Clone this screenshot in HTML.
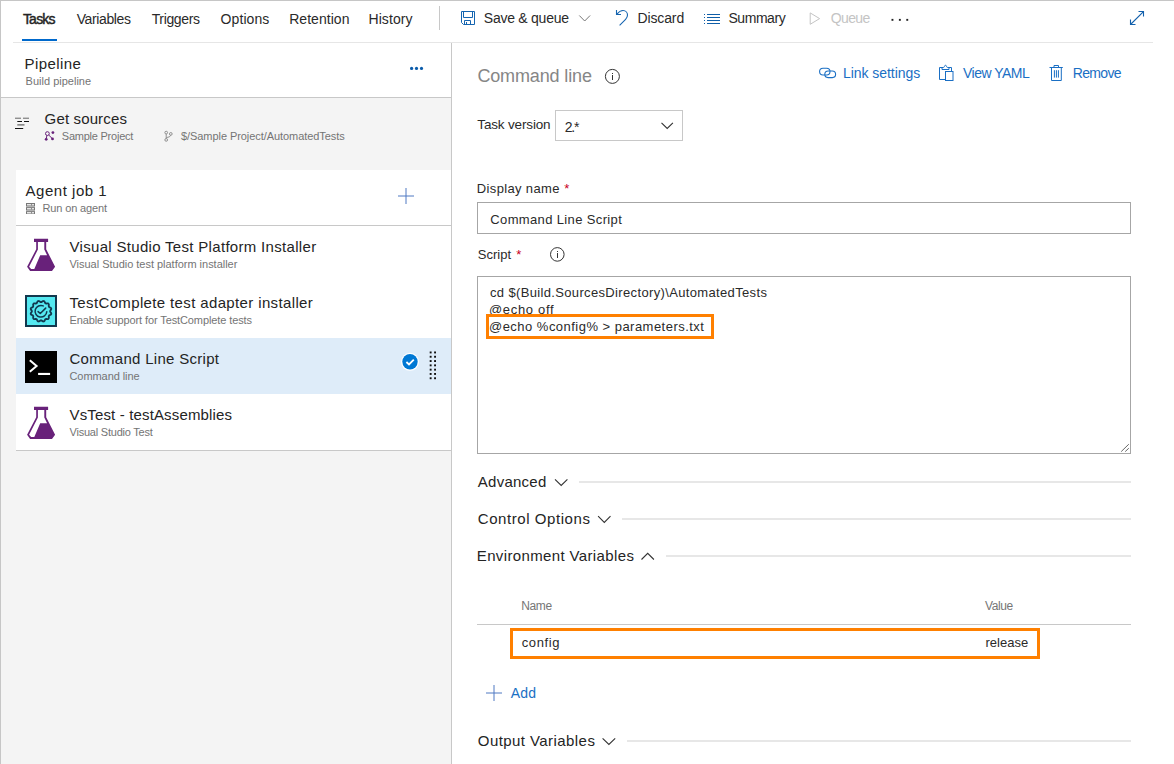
<!DOCTYPE html>
<html lang="en">
<head>
<meta charset="utf-8">
<title>Build pipeline - Tasks</title>
<style>
html,body{margin:0;padding:0;background:#fff}
body{width:1174px;height:764px;position:relative;overflow:hidden;font-family:"Liberation Sans",sans-serif}
.b{position:absolute}
.t{position:absolute;white-space:pre;line-height:20px;height:20px}
svg{position:absolute;left:0;top:0;overflow:visible}
</style>
</head>
<body>
<!-- frame borders -->
<div class="b" style="left:0;top:0;width:1174px;height:1px;background:#c6c6c6"></div>
<div class="b" style="left:0;top:0;width:1px;height:764px;background:#c6c6c6"></div>

<!-- tab underline + header rule -->
<div class="b" style="left:13px;top:42px;width:1140px;height:1px;background:#e6e6e6"></div>
<div class="b" style="left:22px;top:39px;width:35px;height:2px;background:#0069cc"></div>
<div class="b" style="left:439px;top:6px;width:1px;height:24px;background:#c8c8c8"></div>

<!-- left panel -->
<div class="b" style="left:1px;top:98px;width:450px;height:666px;background:#f4f4f4"></div>
<div class="b" style="left:1px;top:97px;width:450px;height:1px;background:#c8c8c8"></div>
<div class="b" style="left:451px;top:43px;width:1px;height:721px;background:#c8c8c8"></div>
<div class="b" style="left:16px;top:170px;width:435px;height:280px;background:#fff"></div>
<div class="b" style="left:16px;top:225px;width:435px;height:1px;background:#c8c8c8"></div>
<div class="b" style="left:16px;top:450px;width:435px;height:1px;background:#c8c8c8"></div>
<div class="b" style="left:16px;top:338px;width:435px;height:56px;background:#deecf9"></div>

<!-- right panel boxes -->
<div class="b" style="left:555px;top:110px;width:126px;height:29px;border:1px solid #c8c8c8;background:#fff"></div>
<div class="b" style="left:477px;top:202px;width:652px;height:30px;border:1px solid #a6a6a6;background:#fff"></div>
<div class="b" style="left:477px;top:276px;width:652px;height:176px;border:1px solid #a6a6a6;background:#fff"></div>
<div class="b" style="left:579px;top:481px;width:552px;height:2px;background:#e7e7e7"></div>
<div class="b" style="left:622px;top:518px;width:509px;height:2px;background:#e7e7e7"></div>
<div class="b" style="left:666px;top:555px;width:465px;height:2px;background:#e7e7e7"></div>
<div class="b" style="left:627px;top:740px;width:504px;height:2px;background:#e7e7e7"></div>
<div class="b" style="left:477px;top:624px;width:654px;height:1px;background:#c8c8c8"></div>

<span class="t" style="left:22.90px;top:9.15px;font-size:14px;color:#242424;letter-spacing:-0.772px;-webkit-text-stroke:0.45px #242424">Tasks</span>
<span class="t" style="left:76.70px;top:9.15px;font-size:14px;color:#2a2a2a;letter-spacing:-0.391px">Variables</span>
<span class="t" style="left:151.70px;top:9.15px;font-size:14px;color:#2a2a2a;letter-spacing:-0.361px">Triggers</span>
<span class="t" style="left:220.60px;top:9.15px;font-size:14px;color:#2a2a2a;letter-spacing:0.075px">Options</span>
<span class="t" style="left:289.20px;top:9.15px;font-size:14px;color:#2a2a2a;letter-spacing:0.044px">Retention</span>
<span class="t" style="left:368.50px;top:9.15px;font-size:14px;color:#2a2a2a;letter-spacing:0.074px">History</span>
<span class="t" style="left:483.80px;top:8.15px;font-size:14px;color:#2a2a2a;letter-spacing:-0.252px">Save &amp; queue</span>
<span class="t" style="left:637.40px;top:8.15px;font-size:14px;color:#2a2a2a;letter-spacing:-0.111px">Discard</span>
<span class="t" style="left:728.40px;top:8.15px;font-size:14px;color:#2a2a2a;letter-spacing:-0.433px">Summary</span>
<span class="t" style="left:830.70px;top:8.15px;font-size:14px;color:#c4c4c4;letter-spacing:-0.612px">Queue</span>
<span class="t" style="left:24.60px;top:53.80px;font-size:15px;color:#242424;letter-spacing:0.396px">Pipeline</span>
<span class="t" style="left:25.60px;top:71.19px;font-size:11px;color:#747474;letter-spacing:0.006px">Build pipeline</span>
<span class="t" style="left:44.60px;top:108.80px;font-size:15px;color:#242424;letter-spacing:0.143px">Get sources</span>
<span class="t" style="left:61.80px;top:126.19px;font-size:11px;color:#747474;letter-spacing:-0.233px">Sample Project</span>
<span class="t" style="left:181.00px;top:126.19px;font-size:11px;color:#747474;letter-spacing:-0.066px">$/Sample Project/AutomatedTests</span>
<span class="t" style="left:25.60px;top:180.80px;font-size:15px;color:#242424;letter-spacing:0.515px">Agent job 1</span>
<span class="t" style="left:42.50px;top:198.19px;font-size:11px;color:#747474;letter-spacing:-0.136px">Run on agent</span>
<span class="t" style="left:69.50px;top:236.80px;font-size:15px;color:#242424;letter-spacing:0.312px">Visual Studio Test Platform Installer</span>
<span class="t" style="left:69.50px;top:254.19px;font-size:11px;color:#747474;letter-spacing:-0.019px">Visual Studio test platform installer</span>
<span class="t" style="left:69.50px;top:292.80px;font-size:15px;color:#242424;letter-spacing:0.363px">TestComplete test adapter installer</span>
<span class="t" style="left:69.50px;top:310.19px;font-size:11px;color:#747474;letter-spacing:-0.105px">Enable support for TestComplete tests</span>
<span class="t" style="left:69.50px;top:348.80px;font-size:15px;color:#242424;letter-spacing:0.291px">Command Line Script</span>
<span class="t" style="left:69.50px;top:366.19px;font-size:11px;color:#747474;letter-spacing:-0.073px">Command line</span>
<span class="t" style="left:69.50px;top:404.80px;font-size:15px;color:#242424;letter-spacing:0.149px">VsTest - testAssemblies</span>
<span class="t" style="left:69.50px;top:422.19px;font-size:11px;color:#747474;letter-spacing:-0.217px">Visual Studio Test</span>
<span class="t" style="left:477.40px;top:65.76px;font-size:18px;color:#868686;letter-spacing:-0.140px">Command line</span>
<span class="t" style="left:843.00px;top:63.15px;font-size:14px;color:#1a6fc4;letter-spacing:-0.052px">Link settings</span>
<span class="t" style="left:963.00px;top:63.15px;font-size:14px;color:#1a6fc4;letter-spacing:-0.510px">View YAML</span>
<span class="t" style="left:1072.80px;top:63.15px;font-size:14px;color:#1a6fc4;letter-spacing:-0.689px">Remove</span>
<span class="t" style="left:477.30px;top:115.32px;font-size:13.5px;color:#2a2a2a;letter-spacing:-0.156px">Task version</span>
<span class="t" style="left:564.70px;top:117.15px;font-size:14px;color:#2a2a2a;letter-spacing:-1.188px">2.*</span>
<span class="t" style="left:476.80px;top:178.50px;font-size:13px;color:#2a2a2a;letter-spacing:0.352px">Display name</span>
<span class="t" style="left:564.30px;top:178.50px;font-size:13px;color:#c8001e;letter-spacing:0.000px">*</span>
<span class="t" style="left:490.30px;top:209.50px;font-size:13px;color:#2a2a2a;letter-spacing:0.362px">Command Line Script</span>
<span class="t" style="left:477.80px;top:244.50px;font-size:13px;color:#2a2a2a;letter-spacing:0.016px">Script</span>
<span class="t" style="left:516.20px;top:244.50px;font-size:13px;color:#c8001e;letter-spacing:0.000px">*</span>
<span class="t" style="left:490.00px;top:282.50px;font-size:13px;color:#2a2a2a;letter-spacing:0.348px">cd $(Build.SourcesDirectory)\AutomatedTests</span>
<span class="t" style="left:489.00px;top:299.50px;font-size:13px;color:#2a2a2a;letter-spacing:0.674px">@echo off</span>
<span class="t" style="left:489.00px;top:316.50px;font-size:13px;color:#2a2a2a;letter-spacing:0.474px">@echo %config% &gt; parameters.txt</span>
<span class="t" style="left:477.80px;top:471.80px;font-size:15px;color:#242424;letter-spacing:0.247px">Advanced</span>
<span class="t" style="left:477.80px;top:508.80px;font-size:15px;color:#242424;letter-spacing:0.563px">Control Options</span>
<span class="t" style="left:476.80px;top:545.80px;font-size:15px;color:#242424;letter-spacing:0.365px">Environment Variables</span>
<span class="t" style="left:521.30px;top:595.84px;font-size:12px;color:#767676;letter-spacing:-0.412px">Name</span>
<span class="t" style="left:985.00px;top:595.84px;font-size:12px;color:#767676;letter-spacing:-0.432px">Value</span>
<span class="t" style="left:521.70px;top:632.50px;font-size:13px;color:#2a2a2a;letter-spacing:0.608px">config</span>
<span class="t" style="left:985.50px;top:632.50px;font-size:13px;color:#2a2a2a;letter-spacing:0.015px">release</span>
<span class="t" style="left:510.70px;top:683.15px;font-size:14px;color:#1a6fc4;letter-spacing:0.238px">Add</span>
<span class="t" style="left:477.80px;top:730.80px;font-size:15px;color:#242424;letter-spacing:0.432px">Output Variables</span>

<!-- orange highlight boxes -->
<div class="b" style="left:486px;top:314px;width:222px;height:19px;border:3px solid #ff8000"></div>
<div class="b" style="left:510px;top:628px;width:524px;height:25px;border:3px solid #ff8000"></div>

<svg width="1174" height="764" viewBox="0 0 1174 764" fill="none">
<!-- save -->
<path d="M461.5 11.5H474.5V24.5H463.5L461.5 22.5ZM463.5 11.5V17.5H472.5V11.5M464.5 24.5V20.5H470.5V24.5M466.5 22V24.5" stroke="#1565b0" stroke-width="1"/>
<!-- chevron save -->
<path d="M579.3 15.5L584.7 21L590.1 15.5" stroke="#777" stroke-width="1"/>
<!-- discard -->
<path d="M616.5 10V14.5H621M616.9 14.1C619 11.6 621 10.5 623 10.5C626 10.5 627.5 13 627.5 15C627.5 17 626.6 18.3 625.6 19.3L619.6 25.3" stroke="#1565b0" stroke-width="1.1"/>
<!-- summary -->
<g fill="#0f5ea8"><rect x="704" y="14" width="1" height="1"/><rect x="707" y="14" width="13" height="1"/><rect x="704" y="17" width="1" height="1"/><rect x="707" y="17" width="13" height="1"/><rect x="704" y="20" width="1" height="1"/><rect x="707" y="20" width="13" height="1"/><rect x="704" y="23" width="1" height="1"/><rect x="707" y="23" width="13" height="1"/></g>
<!-- queue play -->
<path d="M810.2 12.9V24.3L819.6 18.6Z" stroke="#c4c4c4" stroke-width="1"/>
<!-- more dots -->
<g fill="#222"><rect x="891.5" y="18.9" width="1.9" height="1.9"/><rect x="898.9" y="18.9" width="1.9" height="1.9"/><rect x="906.3" y="18.9" width="1.9" height="1.9"/></g>
<!-- expand -->
<path d="M1131 24L1143.2 11.8M1138.5 11.5H1143.5V16.5M1130.5 19.5V24.5H1135.5" stroke="#1260ac" stroke-width="1.1"/>
<!-- pipeline dots -->
<g fill="#0b5cab"><circle cx="411.6" cy="68.4" r="1.6"/><circle cx="416.5" cy="68.4" r="1.6"/><circle cx="421.5" cy="68.4" r="1.6"/></g>
<!-- get sources -->
<g><rect x="15" y="117.7" width="6" height="1" fill="#666"/><rect x="23" y="117.7" width="6" height="1" fill="#666"/><rect x="17.3" y="121" width="4.7" height="1" fill="#111"/><rect x="24" y="121" width="5" height="1" fill="#111"/><rect x="17.3" y="124" width="7.2" height="1.7" fill="#8a8a8a"/><rect x="15" y="128" width="8.2" height="1" fill="#111"/></g>
<!-- project icon -->
<g stroke="#68217a" stroke-width="1"><circle cx="47.4" cy="133.6" r="1.9"/><path d="M46.9 135.5L46.3 138.3M48.7 135L52 138.3"/></g>
<g fill="#68217a"><circle cx="52.9" cy="132.6" r="1.4"/><circle cx="46.2" cy="139.3" r="1.4"/><circle cx="52.5" cy="138.9" r="1.4"/></g>
<!-- branch icon -->
<g stroke="#858585" stroke-width="0.9"><circle cx="166.2" cy="132.6" r="1.35"/><circle cx="170.8" cy="133.9" r="1.35"/><circle cx="166.2" cy="139.9" r="1.35"/><path d="M166.2 134V138.5M170.6 135.3C170.3 136.8 168.6 137.2 166.4 137.5"/></g>
<!-- server icon -->
<g><rect x="26" y="203" width="9" height="11" fill="#787878"/><rect x="26" y="206.3" width="9" height="0.9" fill="#c9c9c9"/><rect x="26" y="210.3" width="9" height="0.9" fill="#c9c9c9"/><rect x="27" y="204.2" width="7" height="1.2" fill="#fff"/><rect x="27" y="208.2" width="7" height="1.2" fill="#fff"/><rect x="27" y="212.2" width="7" height="1.2" fill="#fff"/><rect x="31" y="204.2" width="1" height="1.2" fill="#777"/><rect x="31" y="208.2" width="1" height="1.2" fill="#777"/><rect x="31" y="212.2" width="1" height="1.2" fill="#777"/></g>
<!-- plus agent -->
<path d="M398 196H414M406 188V204" stroke="#4f78c2" stroke-width="1"/>
<!-- flasks -->
<g id="flask1" fill="#68217a" fill-rule="evenodd"><path d="M34 238.8H48.1V242H46.2V249.3L55.1 266.8L52 270.9H30.1L27.1 266.8L36.2 249.3V242H34ZM37.9 242H44.3V249.6L47.1 255.2H40.2L34.3 269.1H31.1L29.1 266.7L37.9 249.6Z"/></g>
<g fill="#68217a" fill-rule="evenodd" transform="translate(0 168)"><path d="M34 238.8H48.1V242H46.2V249.3L55.1 266.8L52 270.9H30.1L27.1 266.8L36.2 249.3V242H34ZM37.9 242H44.3V249.6L47.1 255.2H40.2L34.3 269.1H31.1L29.1 266.7L37.9 249.6Z"/></g>
<!-- testcomplete -->
<rect x="26" y="296" width="30" height="30" fill="#55e9f1" stroke="#12384e" stroke-width="2"/>
<path d="M50.1 311.2 50.2 311.7 50.4 312.1 50.8 312.5 51.1 313.0 51.3 313.5 51.2 314.0 51.0 314.4 50.7 314.8 50.1 315.0 49.5 315.2 49.2 315.5 48.9 315.8 48.8 316.2 48.7 316.6 48.8 317.2 48.9 317.9 48.7 318.3 48.5 318.7 48.1 319.0 47.6 319.1 47.0 319.1 46.4 318.9 45.9 319.0 45.6 319.2 45.2 319.4 45.0 319.8 44.8 320.4 44.5 320.9 44.2 321.3 43.7 321.4 43.3 321.5 42.8 321.4 42.3 321.0 41.8 320.6 41.4 320.4 41.0 320.4 40.6 320.4 40.2 320.6 39.7 321.0 39.2 321.4 38.7 321.5 38.3 321.4 37.8 321.3 37.5 320.9 37.2 320.4 37.0 319.8 36.8 319.4 36.4 319.2 36.1 319.0 35.6 318.9 35.0 319.1 34.4 319.1 33.9 319.0 33.5 318.7 33.3 318.3 33.1 317.9 33.2 317.2 33.3 316.6 33.2 316.2 33.1 315.8 32.8 315.5 32.5 315.2 31.9 315.0 31.3 314.8 31.0 314.4 30.8 314.0 30.7 313.5 30.9 313.0 31.2 312.5 31.6 312.1 31.8 311.7 31.9 311.2 31.8 310.8 31.6 310.4 31.2 310.0 30.9 309.5 30.7 309.0 30.8 308.5 31.0 308.1 31.3 307.7 31.9 307.5 32.5 307.3 32.8 307.0 33.1 306.7 33.2 306.3 33.3 305.9 33.2 305.3 33.1 304.6 33.3 304.2 33.5 303.8 33.9 303.5 34.4 303.4 35.0 303.4 35.6 303.6 36.1 303.5 36.4 303.3 36.8 303.1 37.0 302.7 37.2 302.1 37.5 301.6 37.8 301.2 38.3 301.1 38.7 301.0 39.2 301.1 39.7 301.5 40.2 301.9 40.6 302.1 41.0 302.1 41.4 302.1 41.8 301.9 42.3 301.5 42.8 301.1 43.3 301.0 43.7 301.1 44.2 301.2 44.5 301.6 44.8 302.1 45.0 302.7 45.2 303.1 45.6 303.3 45.9 303.5 46.4 303.6 47.0 303.4 47.6 303.4 48.1 303.5 48.5 303.8 48.7 304.2 48.9 304.6 48.8 305.3 48.7 305.9 48.8 306.3 48.9 306.7 49.2 307.0 49.5 307.3 50.1 307.5 50.7 307.7 51.0 308.1 51.2 308.5 51.3 309.0 51.1 309.5 50.8 310.0 50.4 310.4 50.2 310.8Z" stroke="#12384e" stroke-width="1.8" stroke-linejoin="round"/>
<path d="M43.24 305.87A5.85 5.85 0 1 0 46.78 311.76" stroke="#12384e" stroke-width="1.5" stroke-linecap="round"/>
<path d="M38.1 311.6L40.3 313.5L45.7 308.1" stroke="#12384e" stroke-width="1.5" stroke-linecap="round" stroke-linejoin="round"/>
<!-- cmd -->
<rect x="25" y="351" width="32" height="32" fill="#000"/>
<path d="M29.8 360.2L36.6 366L29.8 371.8" stroke="#fff" stroke-width="2"/>
<rect x="38.1" y="372.9" width="12" height="2.1" fill="#fff"/>
<!-- check -->
<circle cx="410" cy="361.8" r="9" fill="#fff"/>
<circle cx="410" cy="361.8" r="7.7" fill="#0078d4"/>
<path d="M406.4 362L409 364.5L413.8 359.6" stroke="#fff" stroke-width="1.8"/>
<!-- drag dots -->
<g fill="#111">
<rect x="429.7" y="351.5" width="1.9" height="1.9"/><rect x="434.1" y="351.5" width="1.9" height="1.9"/>
<rect x="429.7" y="355.8" width="1.9" height="1.9"/><rect x="434.1" y="355.8" width="1.9" height="1.9"/>
<rect x="429.7" y="360.1" width="1.9" height="1.9"/><rect x="434.1" y="360.1" width="1.9" height="1.9"/>
<rect x="429.7" y="364.4" width="1.9" height="1.9"/><rect x="434.1" y="364.4" width="1.9" height="1.9"/>
<rect x="429.7" y="368.7" width="1.9" height="1.9"/><rect x="434.1" y="368.7" width="1.9" height="1.9"/>
<rect x="429.7" y="373" width="1.9" height="1.9"/><rect x="434.1" y="373" width="1.9" height="1.9"/>
<rect x="429.7" y="377.3" width="1.9" height="1.9"/><rect x="434.1" y="377.3" width="1.9" height="1.9"/>
</g>
<!-- info icons -->
<circle cx="612.4" cy="76.4" r="7" stroke="#333" stroke-width="1"/>
<rect x="612" y="73" width="1" height="1" fill="#333"/><rect x="612" y="75" width="1" height="5" fill="#333"/>
<circle cx="557.3" cy="254.4" r="6.8" stroke="#333" stroke-width="1"/>
<rect x="557" y="251" width="1" height="1" fill="#333"/><rect x="557" y="253" width="1" height="5" fill="#333"/>
<!-- link -->
<g stroke="#1a6fc4" stroke-width="1.1"><rect x="819.6" y="68.2" width="10.4" height="6.8" rx="3.4"/><rect x="824.8" y="71" width="10.8" height="6.6" rx="3.3"/></g>
<!-- clipboard -->
<g stroke="#1a6fc4" stroke-width="1"><path d="M945.5 79.5H939.5V67.5H943.5C944.6 67.5 944.2 65.3 945.5 65.3C946.8 65.3 946.4 67.5 947.5 67.5H951.5V71.5M942 67.5V69.5H949V67.5"/><rect x="945.5" y="71.5" width="7.5" height="9"/></g>
<!-- trash -->
<g stroke="#1a6fc4" stroke-width="1"><path d="M1049.5 67.5H1062.8M1054 67.5V65.5H1058.5V67.5M1051.5 67.5V80.5H1061.3V67.5M1054.4 70.2V77.6M1056.4 70.2V77.6M1058.4 70.2V77.6"/></g>
<!-- select chevron -->
<path d="M661.5 122.8L667.2 128.5L672.9 122.8" stroke="#333" stroke-width="1.1"/>
<!-- section chevrons -->
<g stroke="#333" stroke-width="1.1"><path d="M555 479.3L561.2 485.5L567.4 479.3"/><path d="M598.1 516.2L604.3 522.4L610.5 516.2"/><path d="M641.5 559.5L647.7 553.3L653.9 559.5"/><path d="M602.6 738.3L608.9 744.5L615.2 738.3"/></g>
<!-- resize handle -->
<path d="M1121.2 451.6L1128.8 444.2M1125.2 451.6L1128.8 448.2" stroke="#555" stroke-width="0.9"/>
<!-- plus add -->
<path d="M486 693H502M494 685V701" stroke="#4f78c2" stroke-width="1"/>
</svg>

</body>
</html>
